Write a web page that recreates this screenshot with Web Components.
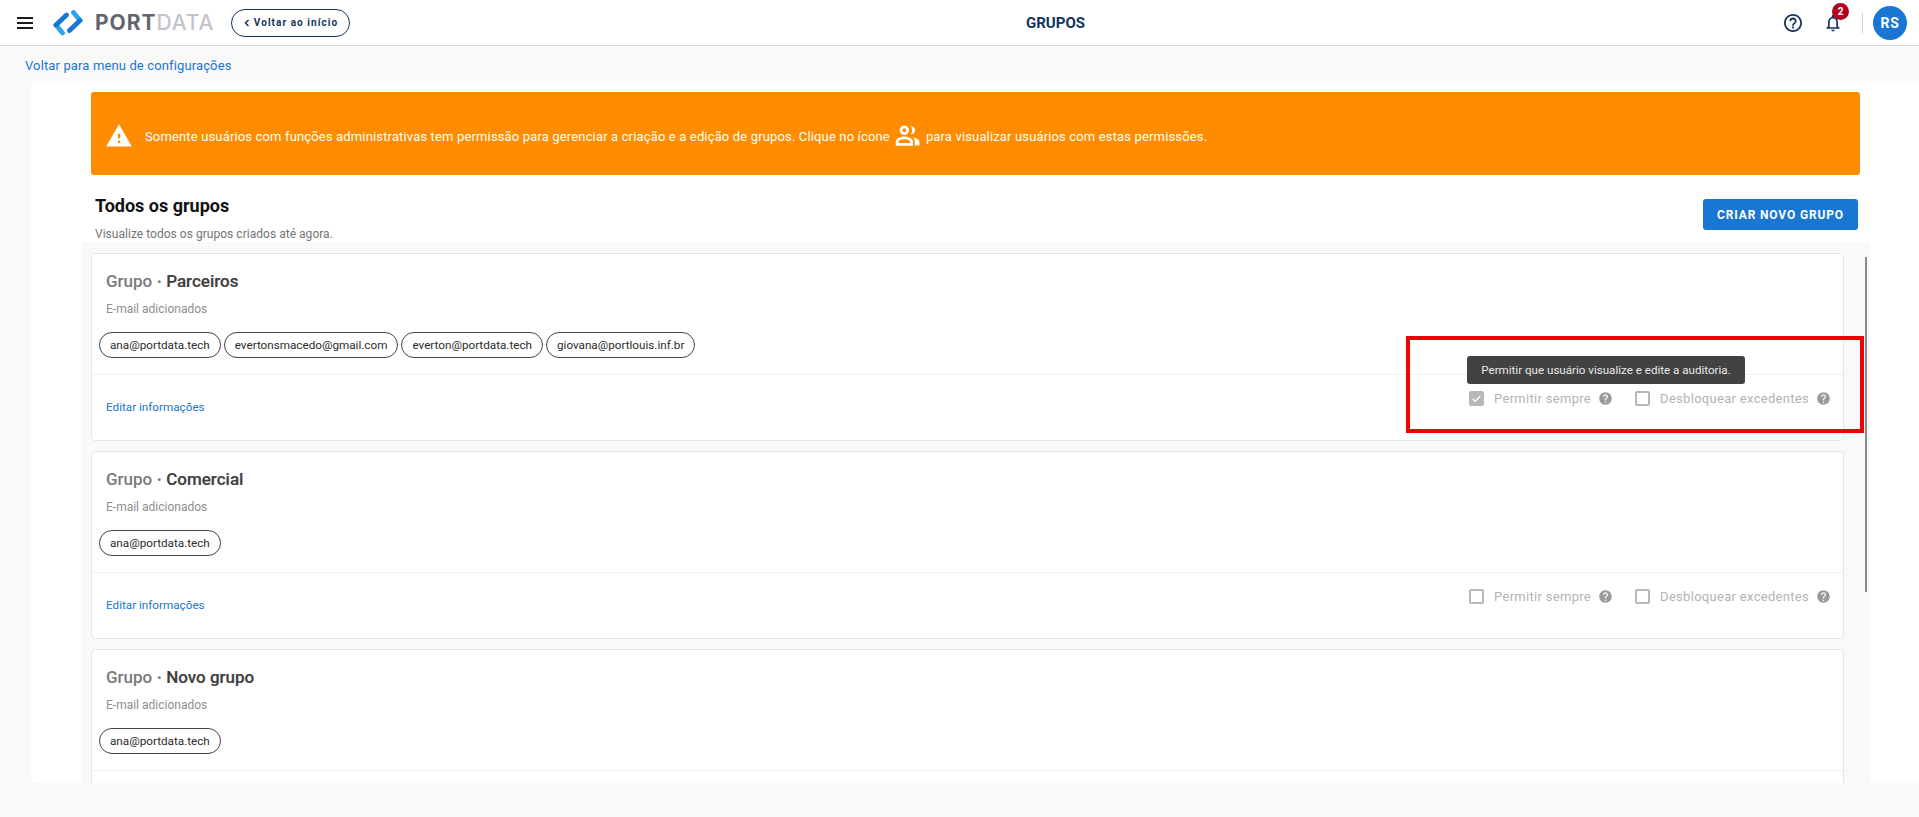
<!DOCTYPE html>
<html lang="pt-BR">
<head>
<meta charset="utf-8">
<title>Grupos</title>
<style>
html,body{margin:0;padding:0;height:817px;overflow:hidden;background:#f9f9f9;font-family:Roboto,"Liberation Sans",sans-serif;}
</style>
</head>
<body>
<config-page></config-page>

<script>
const headerTemplate=document.createElement('template');
headerTemplate.innerHTML=`
<style>
:host{display:grid;grid-template-columns:1026px auto 1fr;align-items:center;height:45px;background:#fff;border-bottom:1px solid #d6d6d6;box-sizing:content-box;}
.left{display:flex;align-items:center;padding-left:17px;}
.menu{width:16px;height:12px;display:block;}
.logo{display:flex;align-items:center;margin-left:20px;}
.logo svg{display:block;width:30px;height:26px;}
.name{font-family:Inter,sans-serif;font-size:21px;line-height:26px;margin-left:12px;letter-spacing:.95px;color:#c2c4cb;font-weight:500;}
.name b{color:#63656e;font-weight:700;}
.back{display:flex;align-items:center;justify-content:center;box-sizing:border-box;width:119px;height:28px;margin-left:17px;border:1px solid #12345e;border-radius:14px;color:#12345e;font-size:10px;font-weight:700;letter-spacing:1.05px;}
.back svg{margin-right:4px;}
.title{font-size:15px;font-weight:700;color:#12345e;}
.right{display:flex;align-items:center;justify-content:flex-end;padding-right:12px;}
.help{display:block;width:18px;height:18px;}
.bell{position:relative;width:20px;height:20px;margin-left:21px;}
.bell svg{display:block;}
.badge{position:absolute;left:9px;top:-10px;width:17px;height:17px;border-radius:50%;background:#b00020;color:#fff;font-size:10px;font-weight:700;text-align:center;line-height:17px;}
.sep{width:1px;height:20px;background:#bcd6ee;margin-left:19px;}
.avatar{width:34px;height:34px;margin-left:10px;border-radius:50%;background:#1976d2;color:#fff;font-size:14px;font-weight:700;letter-spacing:.6px;text-align:center;line-height:34px;}
</style>
<div class="left">
<svg class="menu" viewBox="0 0 16 12"><path d="M0 0h16v2H0zM0 5h16v2H0zM0 10h16v2H0z" fill="#1b1b1b"/></svg>
<div class="logo">
<svg viewBox="0 0 30 26" fill="none" stroke-width="4.800" stroke-linecap="round">
<path d="M3 15 9.500 23" stroke="#2aa5ee"/>
<path d="M13.500 5 3 15" stroke="#1976d2"/>
<path d="M20.500 2.500 27 10.500" stroke="#2aa5ee"/>
<path d="M27 10.500 16.500 20.500" stroke="#1976d2"/>
</svg>
<div class="name"><b>PORT</b>DATA</div>
</div>
<div class="back"><svg width="6" height="8" viewBox="0 0 6 8"><path d="M4.500 1 1.500 4l3 3" fill="none" stroke="#12345e" stroke-width="1.500"/></svg>Voltar ao início</div>
</div>
<div class="title">GRUPOS</div>
<div class="right">
<svg class="help" viewBox="2 2 20 20"><path d="M11 18h2v-2h-2v2zm1-16C6.480 2 2 6.480 2 12s4.480 10 10 10 10-4.480 10-10S17.520 2 12 2zm0 18c-4.410 0-8-3.590-8-8s3.590-8 8-8 8 3.590 8 8-3.590 8-8 8zm0-14c-2.210 0-4 1.790-4 4h2c0-1.100.900-2 2-2s2 .900 2 2c0 2-3 1.750-3 5h2c0-2.250 3-2.500 3-5 0-2.210-1.790-4-4-4z" fill="#12345e"/></svg>
<div class="bell">
<svg width="20" height="20" viewBox="0 0 24 24"><path d="M12 22c1.100 0 2-.900 2-2h-4c0 1.100.900 2 2 2zm6-6v-5c0-3.070-1.630-5.640-4.500-6.320V4c0-.830-.670-1.500-1.500-1.500s-1.500.670-1.500 1.500v.680C7.640 5.360 6 7.920 6 11v5l-2 2v1h16v-1l-2-2zm-2 1H8v-6c0-2.480 1.510-4.500 4-4.500s4 2.020 4 4.500v6z" fill="#12345e"/></svg>
<div class="badge">2</div>
</div>
<div class="sep"></div>
<div class="avatar">RS</div>
</div>
`;
class AppHeader extends HTMLElement{
    constructor(){
        super();
        this.attachShadow({mode:'open'});
        this.shadowRoot.append(headerTemplate.content.cloneNode(true));
    }
}
customElements.define('app-header',AppHeader);

const bannerTemplate=document.createElement('template');
bannerTemplate.innerHTML=`
<style>
:host{display:flex;align-items:center;height:83px;box-sizing:border-box;padding:6px 0 0 14px;background:#ff8c00;border-radius:3px;color:#fff;font-size:13px;letter-spacing:.15px;}
.warn{width:28px;height:28px;margin:-2px 12px 0 0;flex:none;}
.people{width:25px;height:21px;margin:-2px 6px 0 5px;flex:none;}
</style>
<svg class="warn" viewBox="0 0 24 24"><path d="M1 21h22L12 2 1 21zm12-3h-2v-2h2v2zm0-4h-2v-4h2v4z" fill="#fff"/></svg>
<span>Somente usuários com funções administrativas tem permissão para gerenciar a criação e a edição de grupos. Clique no ícone</span>
<svg class="people" viewBox="0 2 24 20">
<circle cx="9" cy="7" r="3.200" fill="none" stroke="#fff" stroke-width="2.600"/>
<path d="M15 3c2.700 0 4.300 1.800 4.300 4s-1.600 4-4.300 4c.900-1 1.500-2.400 1.500-4s-.600-3-1.500-4z" fill="#fff"/>
<path d="M2 20.500v-2.300c0-2.600 4-4 7-4s7 1.400 7 4v2.300z" fill="none" stroke="#fff" stroke-width="2.600"/>
<path d="M17.500 13.800c3 .400 6 1.900 6 4.400v3.300H19v-3.300c0-1.800-.600-3.300-1.500-4.400z" fill="#fff"/>
</svg>
<span>para visualizar usuários com estas permissões.</span>
`;
class WarningBanner extends HTMLElement{
    constructor(){
        super();
        this.attachShadow({mode:'open'});
        this.shadowRoot.append(bannerTemplate.content.cloneNode(true));
    }
}
customElements.define('warning-banner',WarningBanner);

const chipTemplate=document.createElement('template');
chipTemplate.innerHTML=`
<style>
:host{display:inline-flex;align-items:center;height:26px;box-sizing:border-box;padding:0 10px;border:1px solid #444;border-radius:13px;font-size:11.7px;color:#2b2b2b;background:#fff;}
</style>
<slot></slot>
`;
class EmailChip extends HTMLElement{
    constructor(){
        super();
        this.attachShadow({mode:'open'});
        this.shadowRoot.append(chipTemplate.content.cloneNode(true));
    }
}
customElements.define('email-chip',EmailChip);

const permTemplate=document.createElement('template');
permTemplate.innerHTML=`
<style>
:host{display:flex;align-items:center;font-size:13px;letter-spacing:.3px;color:#b3b3b3;}
.box{width:15px;height:15px;box-sizing:border-box;border:2px solid #b8b8b8;border-radius:2px;margin-right:10px;display:flex;align-items:center;justify-content:center;}
:host([checked]) .box{background:#b8b8b8;}
.box svg{display:none;}
:host([checked]) .box svg{display:block;}
.q{width:15px;height:15px;margin-left:7px;display:block;}
</style>
<div class="box"><svg width="13" height="13" viewBox="0 0 24 24"><path d="M9 16.200 4.800 12l-2 2L9 20.200 21.500 7.700l-2-2z" fill="#fff"/></svg></div>
<slot></slot>
<svg class="q" viewBox="0 0 24 24"><path d="M12 2C6.480 2 2 6.480 2 12s4.480 10 10 10 10-4.480 10-10S17.520 2 12 2zm1 17h-2v-2h2v2zm2.070-7.750-.900.920C13.450 12.900 13 13.500 13 15h-2v-.500c0-1.100.450-2.100 1.170-2.830l1.240-1.260c.370-.360.590-.860.590-1.410 0-1.100-.900-2-2-2s-2 .900-2 2H8c0-2.210 1.790-4 4-4s4 1.790 4 4c0 .880-.360 1.680-.930 2.250z" fill="#9a9a9a"/></svg>
`;
class PermCheck extends HTMLElement{
    constructor(){
        super();
        this.attachShadow({mode:'open'});
        this.shadowRoot.append(permTemplate.content.cloneNode(true));
    }
}
customElements.define('perm-check',PermCheck);

const cardTemplate=document.createElement('template');
cardTemplate.innerHTML=`
<style>
:host{display:block;position:relative;height:188px;flex:none;box-sizing:border-box;background:#fff;border:1px solid #e6e6e6;border-radius:4px;}
.top{height:121px;box-sizing:border-box;padding:17px 0 0 14px;border-bottom:1px solid #efefef;}
.head{font-size:17px;line-height:20px;font-weight:500;color:#7a7a7a;}
.head i{font-style:normal;font-weight:900;}
.head b{font-weight:500;color:#3f3f3f;-webkit-text-stroke:.2px #3f3f3f;}
.sub{font-size:12px;line-height:14px;color:#8e8e8e;margin-top:11px;}
.chips{display:flex;gap:3px;margin:16px 0 0 -7px;}
.bottom{display:flex;align-items:center;justify-content:space-between;height:64px;padding:0 12px 0 14px;}
a{font-size:11.7px;color:#1976d2;text-decoration:none;}
.perms{display:flex;gap:22px;margin-top:-17px;}
</style>
<div class="top">
<div class="head">Grupo <i>·</i> <b id="name"></b></div>
<div class="sub">E-mail adicionados</div>
<div class="chips"><slot></slot></div>
</div>
<div class="bottom">
<a href="#">Editar informações</a>
<div class="perms">
<perm-check id="always">Permitir sempre</perm-check>
<perm-check>Desbloquear excedentes</perm-check>
</div>
</div>
`;
class GroupCard extends HTMLElement{
    constructor(){
        super();
        this.attachShadow({mode:'open'});
        this.shadowRoot.append(cardTemplate.content.cloneNode(true));
    }
    connectedCallback(){
        this.shadowRoot.querySelector('#name').textContent=this.getAttribute('name');
        if(this.hasAttribute('always')) this.shadowRoot.querySelector('#always').setAttribute('checked','');
        // last card is scrolled under the fold, its footer never shows
        if(this.hasAttribute('no-footer')) this.shadowRoot.querySelector('.bottom').remove();
    }
}
customElements.define('group-card',GroupCard);

const pageTemplate=document.createElement('template');
pageTemplate.innerHTML=`
<style>
:host{display:block;position:relative;height:817px;overflow:hidden;}
.crumb{display:block;height:37px;box-sizing:border-box;padding:12px 0 0 25px;font-size:13px;letter-spacing:.13px;line-height:16px;color:#1976d2;text-decoration:none;}
.sheet{margin-left:31px;height:700px;background:#fff;border-radius:4px 0 0 4px;overflow:hidden;display:flex;flex-direction:column;padding:9px 0 0 50px;box-sizing:border-box;}
warning-banner{width:1769px;flex:none;margin-left:10px;}
.intro{display:flex;justify-content:space-between;width:1767px;height:67px;flex:none;margin-left:10px;box-sizing:border-box;padding:20px 0 0 4px;}
h2{margin:0;font-size:18px;line-height:22px;font-weight:700;color:#111;}
p{margin:10px 0 0;font-size:12px;letter-spacing:.03px;line-height:14px;color:#757575;}
button{width:155px;height:31px;margin-top:4px;padding:0;border:0;border-radius:3px;background:#1976d2;color:#fff;font:700 12px Roboto,sans-serif;letter-spacing:.85px;}
.list{width:1789px;flex:1;min-height:0;background:#f9f9f9;border-radius:4px 4px 0 0;overflow:hidden;display:flex;box-sizing:border-box;padding:11px 0 0 10px;position:relative;}
.cards{width:1753px;display:flex;flex-direction:column;gap:10px;}
.bar{position:absolute;left:1784px;top:15px;width:2px;height:335px;background:#8a8a8a;}
.mark{position:absolute;left:1406px;top:336px;width:458px;height:97px;box-sizing:border-box;border:4px solid #f00000;}
.tip{position:absolute;left:1467px;top:356px;width:278px;height:28px;background:#424242;border-radius:3px;color:#e8e8e8;font-size:11.6px;line-height:28px;text-align:center;}
</style>
<app-header></app-header>
<a class="crumb" href="#">Voltar para menu de configurações</a>
<div class="sheet">
<warning-banner></warning-banner>
<div class="intro">
<div><h2>Todos os grupos</h2><p>Visualize todos os grupos criados até agora.</p></div>
<button>CRIAR NOVO GRUPO</button>
</div>
<div class="list">
<div class="cards">
<group-card name="Parceiros" always>
<email-chip>ana@portdata.tech</email-chip>
<email-chip>evertonsmacedo@gmail.com</email-chip>
<email-chip>everton@portdata.tech</email-chip>
<email-chip>giovana@portlouis.inf.br</email-chip>
</group-card>
<group-card name="Comercial"><email-chip>ana@portdata.tech</email-chip></group-card>
<group-card name="Novo grupo" no-footer><email-chip>ana@portdata.tech</email-chip></group-card>
</div>
<div class="bar"></div>
</div>
</div>
<div class="tip">Permitir que usuário visualize e edite a auditoria.</div>
<div class="mark"></div>
`;
class ConfigPage extends HTMLElement{
    constructor(){
        super();
        this.attachShadow({mode:'open'});
        this.shadowRoot.append(pageTemplate.content.cloneNode(true));
    }
}
customElements.define('config-page',ConfigPage);
</script>
</body>
</html>
